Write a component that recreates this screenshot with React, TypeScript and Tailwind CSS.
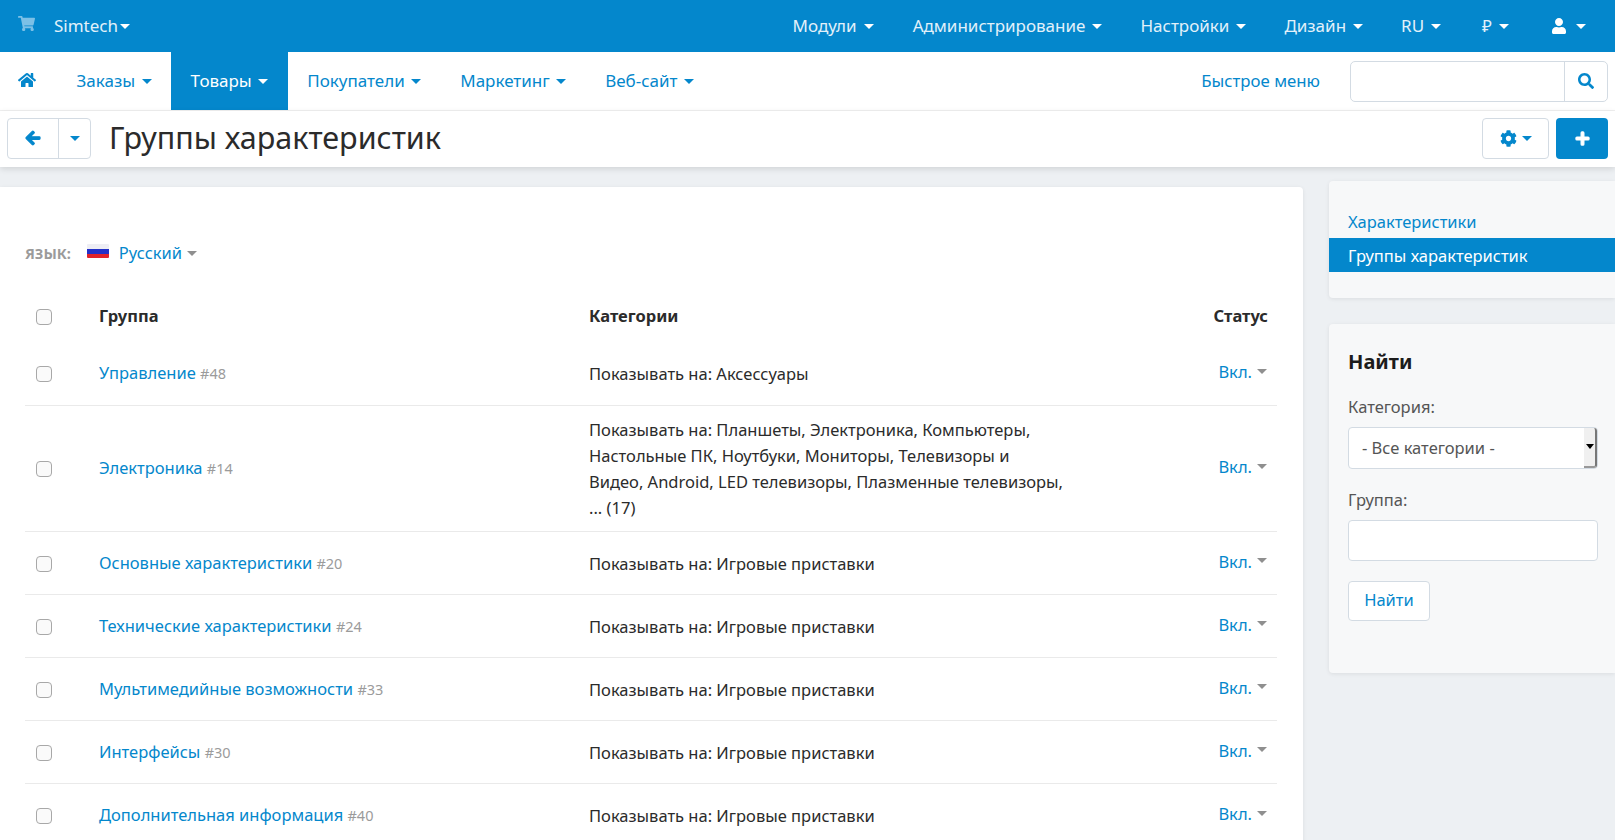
import * as React from "react";
import {FaShoppingCart, FaHome, FaArrowLeft, FaSearch, FaCog, FaPlus, FaUser} from "react-icons/fa";

const Caret = ({className = "border-t-white"}: {className?: string}) => (
    <span className={`inline-block h-0 w-0 border-x-[5px] border-t-[5px] border-x-transparent ${className}`} />
);

const topItems = [
    {label: "Модули", gap: "ml-[38px]"},
    {label: "Администрирование", gap: "ml-[39px]"},
    {label: "Настройки", gap: "ml-[38px]"},
    {label: "Дизайн", gap: "ml-[38px]"},
    {label: "RU", gap: "ml-[38px]"},
    {label: "₽", gap: "ml-[41px]"},
];

const navItems = ["Заказы", "Товары", "Покупатели", "Маркетинг", "Веб-сайт"];

const show = "Показывать на: Игровые приставки";

const rows = [
    {name: "Управление", id: "#48", cats: "Показывать на: Аксессуары", h: "h-[62px]"},
    {name: "Электроника", id: "#14", cats: "Показывать на: Планшеты, Электроника, Компьютеры, Настольные ПК, Ноутбуки, Мониторы, Телевизоры и Видео, Android, LED телевизоры, Плазменные телевизоры, ... (17)", h: "h-[126px] pt-[2px]"},
    {name: "Основные характеристики", id: "#20", cats: show, h: "h-[63px] pt-[2px]"},
    {name: "Технические характеристики", id: "#24", cats: show, h: "h-[63px] pt-[2px]"},
    {name: "Мультимедийные возможности", id: "#33", cats: show, h: "h-[63px] pt-[2px]"},
    {name: "Интерфейсы", id: "#30", cats: show, h: "h-[63px] pt-[2px]"},
    {name: "Дополнительная информация", id: "#40", cats: show, h: "h-[63px] pt-[2px]"},
];

const Checkbox = () => (
    <span className="block h-4 w-4 rounded-[4px] border border-[#a8a8a8] bg-[#fafafa]" />
);

export default function App() {
    return (
        <div className="flex h-[840px] flex-col overflow-hidden bg-[#edf0f3] font-['Noto_Sans',sans-serif] text-[16.5px] text-[#2b2b2b]">
            <header className="flex h-[52px] shrink-0 items-center bg-[#0487cc] pr-[29px] text-[17px] text-[#e2f1fa]">
                <FaShoppingCart className="ml-[18px] -mt-[6px] text-[17px] text-[#7cc0e6]" />
                <span className="ml-[19px] flex items-center gap-[2px]">Simtech <Caret /></span>
                <div className="ml-auto flex items-center">
                    {topItems.map(item => (
                        <span key={item.label} className={`flex items-center gap-[7px] ${item.gap}`}>
                            {item.label} <Caret />
                        </span>
                    ))}
                    <span className="ml-[42px] flex items-center gap-[9px] text-white">
                        <FaUser className="text-[16px]" /> <Caret />
                    </span>
                </div>
            </header>

            <nav className="flex h-[59px] shrink-0 items-stretch border-b border-[#f0f0f0] bg-white pr-[7px] text-[17px] text-[#0487cc]">
                <div className="flex w-[57px] items-center justify-center pb-[2px]">
                    <FaHome className="ml-[-4px] text-[18px]" />
                </div>
                {navItems.map(item => (
                    <div
                        key={item}
                        className={item === "Товары"
                            ? "flex items-center gap-[6.5px] bg-[#0487cc] px-[19.5px] text-white"
                            : "flex items-center gap-[6.5px] px-[19.5px]"}
                    >
                        {item} <Caret className={item === "Товары" ? "border-t-white" : "border-t-[#0487cc]"} />
                    </div>
                ))}
                <span className="ml-auto self-center text-[16.8px]">Быстрое меню</span>
                <div className="ml-[30px] flex h-[41px] w-[258px] self-center rounded-[5px] border border-[#d3dbe3]">
                    <div className="flex-1" />
                    <div className="flex w-[43px] items-center justify-center border-l border-[#d3dbe3]">
                        <FaSearch className="text-[16px]" />
                    </div>
                </div>
            </nav>

            <div className="flex h-[56px] shrink-0 items-center bg-white px-[7px] pb-[2px] shadow-[0_2px_6px_rgba(0,0,0,0.12)]">
                <div className="flex h-[41px] w-[84px] rounded-[4px] border border-[#d3dbe3] text-[#0487cc]">
                    <div className="flex w-[51px] items-center justify-center border-r border-[#d3dbe3]">
                        <FaArrowLeft className="stroke-current stroke-[40] text-[16px]" />
                    </div>
                    <div className="flex flex-1 items-center justify-center">
                        <Caret className="border-t-[#0487cc]" />
                    </div>
                </div>
                <h1 className="ml-[18px] text-[30.5px]">Группы характеристик</h1>
                <div className="ml-auto flex h-[41px] w-[67px] items-center justify-center gap-[5px] rounded-[4px] border border-[#d3dbe3] text-[#0487cc]">
                    <FaCog className="text-[17px]" />
                    <Caret className="border-t-[#0487cc]" />
                </div>
                <div className="ml-[7px] flex h-[41px] w-[52px] items-center justify-center rounded-[4px] bg-[#0487cc] text-white">
                    <FaPlus className="stroke-current stroke-[40] text-[15px]" />
                </div>
            </div>

            <div className="flex min-h-0 flex-1 items-start">
                <main className="mt-[20px] w-[1303px] shrink-0 rounded-tr-[4px] bg-white pb-[100px] pl-[25px] pr-[26px] shadow-[0_1px_4px_rgba(0,0,0,0.08)]">
                    <div className="mt-[54px] flex items-center">
                        <span className="text-[14.5px] font-bold text-[#9b9b9b]">ЯЗЫК:</span>
                        <span className="ml-[16px] -mt-[5px] flex h-[14px] w-[22px] flex-col overflow-hidden rounded-[1px]">
                            <span className="h-[5px] bg-[#eeeef4]" />
                            <span className="h-[5px] bg-[#2330c8]" />
                            <span className="h-[4px] bg-[#e0222a]" />
                        </span>
                        <span className="ml-[10px] text-[#0487cc]">Русский</span>
                        <Caret className="ml-[5px] border-t-[#8f8f8f]" />
                    </div>

                    <div className="mt-[28px] mb-[4px] flex h-[46px] items-center font-bold">
                        <div className="w-[74px] pl-[11px]"><Checkbox /></div>
                        <div className="w-[490px]">Группа</div>
                        <div className="flex-1">Категории</div>
                        <div className="pr-[9px]">Статус</div>
                    </div>

                    {rows.map((row, i) => (
                        <div
                            key={row.name}
                            className={`flex items-center ${row.h} ${i < rows.length - 1 ? "border-b border-[#eaeaea]" : ""}`}
                        >
                            <div className="w-[74px] pl-[11px]"><Checkbox /></div>
                            <div className="w-[490px] -mt-[1px]">
                                <span className="text-[#0487cc]">{row.name}</span>{" "}
                                <span className="text-[14.5px] text-[#9b9b9b]">{row.id}</span>
                            </div>
                            <div className="w-[475px] leading-[26px]">{row.cats}</div>
                            <div className="ml-auto -mt-[3px] flex items-center gap-[5px] pr-[10px]">
                                <span className="text-[#0487cc]">Вкл.</span>
                                <Caret className="-mt-[3px] border-t-[#8f8f8f]" />
                            </div>
                        </div>
                    ))}
                </main>

                <aside className="ml-[26px] flex min-w-0 flex-1 flex-col gap-[26px] pt-[14px]">
                    <div className="h-[117px] rounded-l-[4px] bg-[#f7f8f9] pt-[24px] shadow-[0_1px_4px_rgba(0,0,0,0.08)]">
                        <div className="flex h-[33px] items-center pl-[19px] pt-[2px] text-[#0487cc]">Характеристики</div>
                        <div className="flex h-[34px] items-center bg-[#0487cc] pl-[19px] pt-[2px] text-white">Группы характеристик</div>
                    </div>

                    <div className="h-[349px] rounded-l-[4px] bg-[#f7f8f9] pl-[19px] pr-[17px] pt-[23px] shadow-[0_1px_4px_rgba(0,0,0,0.08)]">
                        <h2 className="text-[20px] font-bold text-[#1c1c1c]">Найти</h2>
                        <div className="mt-[18px] text-[#555]">Категория:</div>
                        <div className="mt-[7px] flex h-[42px] items-center rounded-[4px] border border-[#d3dbe3] bg-white pl-[13px] text-[#555]">
                            <span className="flex-1 pt-[2px]">- Все категории -</span>
                            <span className="flex h-full w-[13px] items-center justify-center rounded-r-[3px] border-r-2 border-b-2 border-r-[#777] border-b-[#999] bg-[#f0f0f0]">
                                <span className="h-0 w-0 border-x-[4px] border-t-[5px] border-x-transparent border-t-black" />
                            </span>
                        </div>
                        <div className="mt-[19px] text-[#555]">Группа:</div>
                        <div className="mt-[7px] h-[41px] rounded-[4px] border border-[#d3dbe3] bg-white" />
                        <button className="mt-[20px] h-[40px] w-[82px] rounded-[4px] border border-[#d3dbe3] bg-white text-[#0487cc]">Найти</button>
                    </div>
                </aside>
            </div>
        </div>
    );
}
